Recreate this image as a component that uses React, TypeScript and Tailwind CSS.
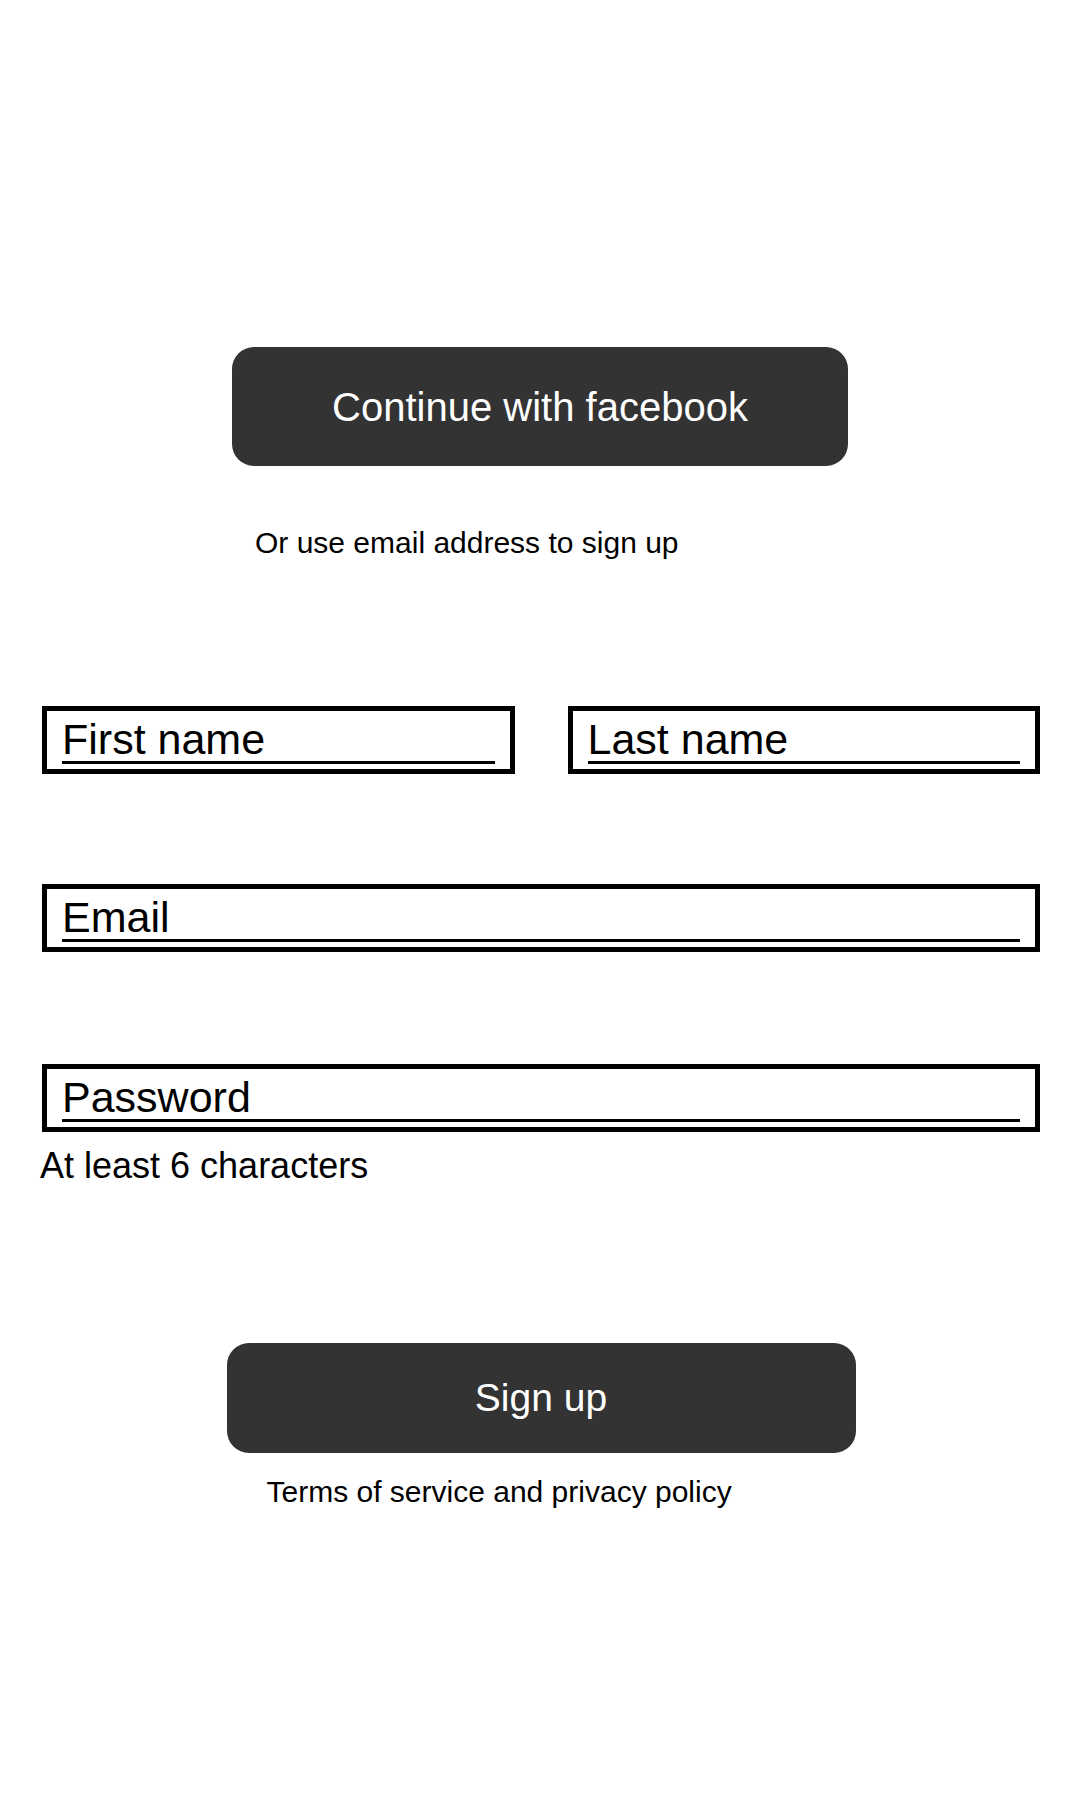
export default function App() {
  const field = "border-[5px] border-black bg-white px-[15px] pt-[7px] pb-[5px]";
  const label = "border-b-[3px] border-black text-[43px] leading-none text-black";

  return (
    <div className="min-h-screen bg-white font-['Liberation_Sans',Arial,sans-serif] text-black">
      {/* Social sign up */}
      <div className="flex flex-col items-center pt-[347px]">
        <button className="h-[119px] w-[616px] rounded-[22px] bg-[#333333] text-[40px] text-white">
          Continue with facebook
        </button>
        <div className="w-[616px] pl-[23px]">
          <p className="mt-[61px] text-[30px] leading-[32px]">Or use email address to sign up</p>
        </div>
      </div>

      {/* Form */}
      <form className="pl-[42px] pr-[40px]">
        <div className="mt-[147px] grid grid-cols-2 gap-x-[53px]">
          <div className={field}>
            <div className={label}>First name</div>
          </div>
          <div className={field}>
            <div className={label}>Last name</div>
          </div>
        </div>

        <div className={`mt-[110px] ${field}`}>
          <div className={label}>Email</div>
        </div>

        <div className={`mt-[112px] ${field}`}>
          <div className={label}>Password</div>
        </div>
        <p className="-ml-[2px] mt-[14px] text-[36px] leading-[40px]">At least 6 characters</p>

        <div className="flex flex-col items-center">
          <button type="button" className="mt-[157px] h-[110px] w-[629px] rounded-[22px] bg-[#333333] text-[39px] text-white">
            Sign up
          </button>
          <div className="w-[629px] pl-[40px]">
            <p className="mt-[22px] text-[30px] leading-[34px]">Terms of service and privacy policy</p>
          </div>
        </div>
      </form>
    </div>
  );
}
